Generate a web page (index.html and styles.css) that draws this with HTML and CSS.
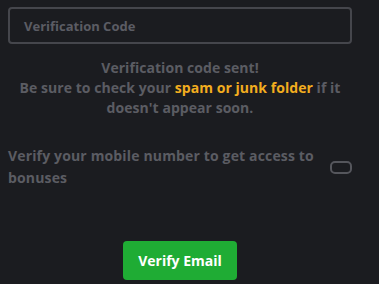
FILE: index.html
```html
<!DOCTYPE html>
<html>
<head>
<meta charset="utf-8">
<link rel="stylesheet" href="styles.css">
</head>
<body>
<div class="page">
  <div class="field"><span class="placeholder">Verification Code</span></div>
  <p class="notice">Verification code sent!<br>Be sure to check your <span class="hl">spam or junk folder</span> if it doesn't appear soon.</p>
  <div class="mobile-row">
    <p class="mobile-text">Verify your mobile number to get access to bonuses</p>
    <span class="toggle"></span>
  </div>
  <div class="actions"><button class="btn">Verify Email</button></div>
</div>
</body>
</html>
```
FILE: styles.css
```css
html, body {
  margin: 0;
  padding: 0;
  background: #1b1c20;
  width: 379px;
  height: 284px;
  overflow: hidden;
}
.page {
  font-family: "Open Sans", "Liberation Sans", sans-serif;
  font-weight: 700;
  padding: 7px 27px 0 8px;
  display: flex;
  flex-direction: column;
}
.field {
  height: 37px;
  border: 2px solid #45464c;
  border-radius: 4px;
  box-sizing: border-box;
  display: flex;
  align-items: center;
  padding-left: 14px;
}
.placeholder {
  color: #5b5c64;
  font-size: 13px;
}
.notice {
  margin: 14px 0 0;
  text-align: center;
  color: #5b5c63;
  font-size: 14px;
  letter-spacing: 0.05px;
  line-height: 20px;
  padding: 0 6px;
}
.hl { color: #f2ad1f; }
.mobile-row {
  margin-top: 27px;
  display: flex;
  align-items: center;
  justify-content: space-between;
}
.mobile-text {
  margin: 0;
  color: #5b5c63;
  font-size: 14px;
  letter-spacing: 0.15px;
  line-height: 22px;
  width: 320px;
}
.toggle {
  width: 22px;
  height: 13px;
  border: 2px solid #55565c;
  border-radius: 5px;
  box-sizing: border-box;
}
.actions {
  margin-top: 52px;
  display: flex;
  justify-content: center;
}
.btn {
  width: 114px;
  height: 39px;
  background: #1fac34;
  border: 0;
  border-radius: 4px;
  color: #ffffff;
  font-family: "Open Sans", "Liberation Sans", sans-serif;
  font-weight: 700;
  font-size: 14px;
}
```
